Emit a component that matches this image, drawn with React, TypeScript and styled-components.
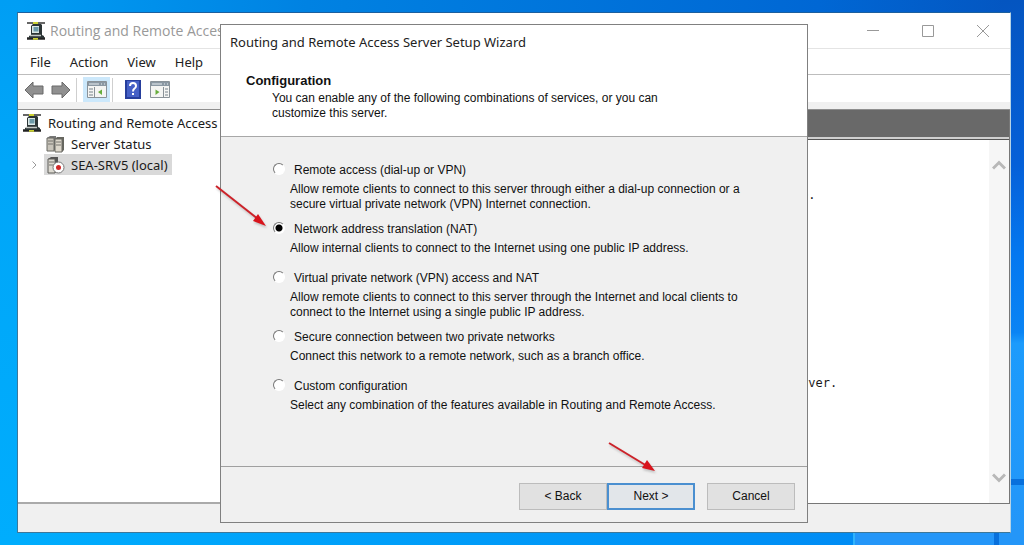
import React, { useState } from "react";
import styled, { createGlobalStyle } from "styled-components";

const ui = `"Noto Sans", "Open Sans", sans-serif`;
const caption = `"Open Sans", "Noto Sans", sans-serif`;
const classic = `"Liberation Sans", Arial, sans-serif`;

const GlobalStyle = createGlobalStyle`
  * { box-sizing: border-box; }
  body { margin: 0; background: #0078d7; font-family: ${ui}; color: #1a1a1a; }
  button, input { font: inherit; }
`;

const Desktop = styled.div`
  position: relative;
  display: flex;
  min-height: 100vh;
  padding: 12px 13px 12px 17px;
  overflow: hidden;
  background: #0a84ea;
`;

const Wallpaper = styled.svg`
  position: absolute;
  inset: 0;
  width: 100%;
  height: 100%;
`;

const ConsoleWindow = styled.section`
  position: relative;
  flex: 1;
  display: flex;
  flex-direction: column;
  min-width: 0;
  background: #f0f0f0;
  border: 1px solid #3d7799;
  border-top-color: #1c5f9e;
  border-right-color: #b5d3e6;
`;

const TitleBar = styled.header`
  display: flex;
  align-items: center;
  gap: 4px;
  height: 35px;
  padding-left: 8px;
  background: #fff;
  color: #999;
  white-space: nowrap;
`;

const WindowTitle = styled.h1`
  flex: 1;
  margin: 0;
  font: 400 14px/20px ${caption};
`;

const CaptionButton = styled.button`
  display: grid;
  place-items: center;
  width: 55px;
  height: 34px;
  padding: 0;
  border: 0;
  background: none;
  color: #999;
`;

const CaptionButtons = styled.div`
  display: flex;
`;

const MenuBar = styled.nav`
  display: flex;
  align-items: center;
  gap: 19px;
  height: 27px;
  padding-left: 12px;
  background: #fff;
  border-top: 1px solid #e4e4e4;
  border-bottom: 1px solid #bdbdbd;
`;

const MenuItem = styled.button`
  padding: 0;
  border: 0;
  background: none;
  color: #222;
  font-size: 13px;
  line-height: 20px;
`;

const ToolBar = styled.div`
  display: flex;
  align-items: flex-end;
  height: 27px;
  padding-left: 2px;
  background: #fff;
`;

const ToolButton = styled.button<{ $on?: boolean }>`
  display: grid;
  place-items: center;
  width: 27px;
  height: 25px;
  padding: 0;
  border: 0;
  background: ${(p) => (p.$on ? "#cce8fb" : "none")};
`;

const ToolDivider = styled.span`
  width: 1px;
  height: 24px;
  margin: 0 6px 0 2px;
  background: #cfcfcf;
`;

const Panes = styled.div`
  flex: 1;
  display: grid;
  grid-template-columns: 206px 1fr;
  margin-top: 7px;
  border-top: 1px solid #8e8e8e;
`;

const TreePane = styled.ul`
  margin: 0;
  padding: 2px 0 0;
  list-style: none;
  background: #fff;
  border-bottom: 2px solid #aaa;
`;

const TreeRow = styled.li<{ $level: number }>`
  display: flex;
  align-items: center;
  gap: 4px;
  height: 21px;
  padding-left: ${(p) => (p.$level ? 10 : 4)}px;
  font-size: 13px;
  line-height: 20px;
  white-space: nowrap;
`;

const Twisty = styled.span`
  display: grid;
  width: 12px;
  place-items: center;
`;

const TreeLabel = styled.span<{ $selected?: boolean }>`
  display: flex;
  align-items: center;
  gap: 6px;
  height: 21px;
  padding: 0 4px 0 2px;
  background: ${(p) => (p.$selected ? "#d9d9d9" : "none")};
`;

const ResultPane = styled.div`
  display: flex;
  flex-direction: column;
  background: #fff;
  border-right: 1px solid #777;
  border-bottom: 1px solid #777;
`;

const ResultHeader = styled.div`
  height: 30px;
  background: #696969;
  border-bottom: 1px solid #555;
  box-shadow: inset 0 -2px #d0d0d0;
`;

const ResultBody = styled.div`
  flex: 1;
  display: flex;
`;

const ResultText = styled.div`
  flex: 1;
  display: flex;
  flex-direction: column;
  gap: 168px;
  padding: 45px 0 0 577px;
  font: 12px/20px "DejaVu Sans Mono", monospace;
  p { margin: 0; }
`;

const ScrollBar = styled.div`
  display: flex;
  flex-direction: column;
  justify-content: space-between;
  align-items: center;
  width: 20px;
  padding: 20px 0;
  background: #f6f6f6;
`;

const StatusBar = styled.footer`
  height: 28px;
`;

const Dialog = styled.section`
  position: absolute;
  top: 24px;
  left: 220px;
  width: min(588px, calc(100% - 220px));
  display: flex;
  flex-direction: column;
  border: 1px solid #808080;
  background: #f0f0f0;
  font-family: ${classic};
  font-size: 12px;
  line-height: 15px;
  color: #111;
`;

const DialogHead = styled.header`
  padding: 6px 9px 15px;
  background: #fff;
  border-bottom: 1px solid #a8a8a8;
`;

const DialogTitle = styled.h2`
  margin: 0 0 20px;
  font: 400 13px/22px ${ui};
  color: #222;
`;

const PageTitle = styled.h3`
  margin: 0 0 3px 16px;
  font-size: 13px;
  line-height: 15px;
`;

const PageIntro = styled.p`
  max-width: 420px;
  margin: 0 0 0 42px;
`;

const Options = styled.fieldset`
  display: flex;
  flex-direction: column;
  gap: 9px;
  min-width: 0;
  margin: 0;
  padding: 25px 44px 48px 52px;
  border: 0;
`;

const Option = styled.div`
  display: grid;
  grid-template-columns: 17px 1fr;
  row-gap: 4px;
`;

const OptionLabel = styled.label`
  grid-column: 1 / -1;
  display: flex;
  align-items: center;
  gap: 9px;
  line-height: 16px;
`;

const Radio = styled.input`
  appearance: none;
  width: 12px;
  height: 12px;
  margin: 0 0 3px;
  border: 1px solid;
  border-color: #777 #fff #fff #777;
  border-radius: 50%;
  background: #fff;

  &:checked {
    background: radial-gradient(circle, #000 3px, #fff 4px);
  }
`;

const OptionText = styled.p`
  grid-column: 2;
  max-width: 468px;
  min-height: 20px;
  margin: 0;
`;

const DialogFoot = styled.footer`
  display: flex;
  justify-content: flex-end;
  padding: 16px 12px 12px;
  border-top: 1px solid #a0a0a0;
`;

const PushButton = styled.button<{ $primary?: boolean; $apart?: boolean }>`
  width: 88px;
  height: 27px;
  margin-left: ${(p) => (p.$apart ? 12 : 0)}px;
  padding: 0;
  border: ${(p) => (p.$primary ? "2px solid #4a8fd0" : "1px solid #bcbcbc")};
  background: ${(p) => (p.$primary ? "#e2e6ea" : "#e1e1e1")};
  color: #111;
`;

const Pointer = styled.svg<{ $x: number; $y: number }>`
  position: absolute;
  left: ${(p) => p.$x}px;
  top: ${(p) => p.$y}px;
  filter: drop-shadow(1px 2px 1px #0003);
`;

const RouterIcon = () => (
  <svg width="20" height="18" viewBox="0 0 20 18" aria-hidden="true">
    <path d="M1 1h18" stroke="#333" strokeWidth="1.500" />
    <path d="M1 16.500h18" stroke="#222" strokeWidth="2.500" />
    <path d="M7 1h5M7 16.500h5" stroke="#ccd233" strokeWidth="2.500" />
    <path d="M5 4l2-2h8l1 1v10l2 1v2H3v-2l2-1z" fill="#2c3536" />
    <path d="M6 4h7v7H6z" fill="#dce8e6" />
    <path d="M7.500 5h5v4.500h-5z" fill="#6d9aa8" />
    <path d="M4 13.500h11" stroke="#c4c9c5" strokeWidth="1.500" />
  </svg>
);

const ServersIcon = () => (
  <svg width="19" height="18" viewBox="0 0 19 18" aria-hidden="true">
    <path d="M1 3l3-2h6v13l-2 2H1z" fill="#777" />
    <path d="M1 3h7v13H1z" fill="#c9c5bb" stroke="#686862" />
    <path d="M9 4l2-2h7v13l-2 2H9z" fill="#66665f" />
    <path d="M9 4h7v13H9z" fill="#ddd8cc" stroke="#686862" />
    <path d="M2 6h5M2 9h5M10 7h5M10 10h5" stroke="#77756e" />
  </svg>
);

const StoppedServerIcon = () => (
  <svg width="19" height="18" viewBox="0 0 19 18" aria-hidden="true">
    <path d="M2 3l3-2h7v13l-2 3H2z" fill="#555" />
    <path d="M2 3h7v14H2z" fill="#dcd9d0" stroke="#5c5c58" />
    <path d="M3 6h5M3 9h5" stroke="#77756e" />
    <circle cx="12.500" cy="11.500" r="5.500" fill="#fff" stroke="#777" />
    <circle cx="12.500" cy="11.500" r="2.500" fill="#d02828" />
  </svg>
);

const ArrowIcon = ({ flip = false }: { flip?: boolean }) => (
  <svg width="20" height="18" viewBox="0 0 20 18" aria-hidden="true">
    <path
      d={flip ? "M19 9l-8-8v4H1v8h10v4z" : "M1 9l8-8v4h10v8H9v4z"}
      fill="#909090"
      stroke="#686868"
    />
  </svg>
);

const PaneIcon = ({ right = false }: { right?: boolean }) => (
  <svg width="20" height="17" viewBox="0 0 20 17" aria-hidden="true">
    <path d="M.5 .5h19v16H.5z" fill="#f5f5f3" stroke="#8a9298" />
    <path d="M1 1h18v4H1z" fill="#8b98a3" />
    <path d="M2 3h10M14 3h1M17 3h1" stroke="#e9eef1" />
    <path d={right ? "M13.500 6v10" : "M7.500 6v10"} stroke="#8a9298" />
    <path d={right ? "M15 8h3M15 11h3M15 14h3" : "M2 8h4M2 11h4M2 14h4"} stroke="#77828b" />
    <path d={right ? "M5.500 8.500l4 2.500-4 3z" : "M15 8.500l-4 2.500 4 3z"} fill="#68ad3c" />
  </svg>
);

const HelpIcon = () => (
  <svg width="16" height="19" viewBox="0 0 16 19" aria-hidden="true">
    <path d="M0 0h16v19H0z" fill="#263e9c" />
    <path d="M2 1h12v16H2z" fill="#4560c6" />
    <path d="M5 6q0-3 3-3t3 3q0 1.500-1.500 2.500T8 11.500" fill="none" stroke="#fff" strokeWidth="2" />
    <path d="M7 13h2v2H7z" fill="#fff" />
  </svg>
);

const Chevron = ({ down = false }: { down?: boolean }) => (
  <svg width="14" height="10" viewBox="0 0 14 10" aria-hidden="true">
    <path d={down ? "M1 1.500l6 6 6-6" : "M1 8.500l6-6 6 6"} fill="none" stroke="#b8b8b8" strokeWidth="3" />
  </svg>
);

const options = [
  ["Remote access (dial-up or VPN)", "Allow remote clients to connect to this server through either a dial-up connection or a secure virtual private network (VPN) Internet connection."],
  ["Network address translation (NAT)", "Allow internal clients to connect to the Internet using one public IP address."],
  ["Virtual private network (VPN) access and NAT", "Allow remote clients to connect to this server through the Internet and local clients to connect to the Internet using a single public IP address."],
  ["Secure connection between two private networks", "Connect this network to a remote network, such as a branch office."],
  ["Custom configuration", "Select any combination of the features available in Routing and Remote Access."],
];

export default function App() {
  const [choice, setChoice] = useState(1);
  return (
    <Desktop>
      <GlobalStyle />
      <Wallpaper viewBox="0 0 1024 545" preserveAspectRatio="none" aria-hidden="true">
        <defs>
          <linearGradient id="top" x1="0" x2="1">
            <stop offset="0" stopColor="#009ef4" />
            <stop offset=".3" stopColor="#0082e2" />
            <stop offset=".8" stopColor="#0067d4" />
            <stop offset="1" stopColor="#0455c0" />
          </linearGradient>
          <linearGradient id="left" x1="0" x2="0" y1="0" y2="1">
            <stop offset="0" stopColor="#009ef4" />
            <stop offset=".3" stopColor="#00a6f8" />
            <stop offset="1" stopColor="#00adfd" />
          </linearGradient>
          <linearGradient id="right" x1="0" x2="0" y1="0" y2="1">
            <stop offset="0" stopColor="#0455c0" />
            <stop offset=".3" stopColor="#0560d8" />
            <stop offset=".47" stopColor="#0478f0" />
            <stop offset=".61" stopColor="#0a84f4" />
            <stop offset=".63" stopColor="#1c9bfc" />
            <stop offset="1" stopColor="#2496f8" />
          </linearGradient>
          <linearGradient id="bottom" x1="0" x2="1">
            <stop offset="0" stopColor="#00adfd" />
            <stop offset="1" stopColor="#008cf4" />
          </linearGradient>
        </defs>
        <path d="M0 0h1024v20H0z" fill="url(#top)" />
        <path d="M0 0h20v545H0z" fill="url(#left)" />
        <path d="M1000 0h24v545h-24z" fill="url(#right)" />
        <path d="M17 530h836v15H17z" fill="url(#bottom)" />
        <path d="M853 530h171v15H853z" fill="#2496f8" />
        <path d="M853 530h2v15h-2z" fill="#30b4fc" />
        <path d="M1010 479h14v6h-14zM994 530h5v15h-5z" fill="#0870dc" />
      </Wallpaper>

      <ConsoleWindow>
        <TitleBar>
          <RouterIcon />
          <WindowTitle>Routing and Remote Access</WindowTitle>
          <CaptionButtons>
            <CaptionButton aria-label="Minimize">
              <svg width="12" height="12"><path d="M0 5.500h12" stroke="currentColor" /></svg>
            </CaptionButton>
            <CaptionButton aria-label="Maximize">
              <svg width="12" height="12"><path d="M.5 .5h11v11H.5z" fill="none" stroke="currentColor" /></svg>
            </CaptionButton>
            <CaptionButton aria-label="Close">
              <svg width="12" height="12"><path d="M0 0l12 12M12 0L0 12" stroke="currentColor" /></svg>
            </CaptionButton>
          </CaptionButtons>
        </TitleBar>
        <MenuBar>
          {["File", "Action", "View", "Help"].map((m) => <MenuItem key={m}>{m}</MenuItem>)}
        </MenuBar>
        <ToolBar>
          <ToolButton aria-label="Back"><ArrowIcon /></ToolButton>
          <ToolButton aria-label="Forward"><ArrowIcon flip /></ToolButton>
          <ToolDivider />
          <ToolButton $on aria-label="Show or hide console tree"><PaneIcon /></ToolButton>
          <ToolDivider />
          <ToolButton aria-label="Help"><HelpIcon /></ToolButton>
          <ToolButton aria-label="Show or hide action pane"><PaneIcon right /></ToolButton>
        </ToolBar>
        <Panes>
          <TreePane>
            <TreeRow $level={0}>
              <RouterIcon />
              <TreeLabel>Routing and Remote Access</TreeLabel>
            </TreeRow>
            <TreeRow $level={1}>
              <Twisty />
              <TreeLabel><ServersIcon />Server Status</TreeLabel>
            </TreeRow>
            <TreeRow $level={1}>
              <Twisty>
                <svg width="5" height="8"><path d="M.5 .5L4 4 .5 7.500" fill="none" stroke="#999" /></svg>
              </Twisty>
              <TreeLabel $selected><StoppedServerIcon />SEA-SRV5 (local)</TreeLabel>
            </TreeRow>
          </TreePane>
          <ResultPane>
            <ResultHeader />
            <ResultBody>
              <ResultText>
                <p>e.</p>
                <p>rver.</p>
              </ResultText>
              <ScrollBar><Chevron /><Chevron down /></ScrollBar>
            </ResultBody>
          </ResultPane>
        </Panes>
        <StatusBar />
      </ConsoleWindow>

      <Dialog role="dialog" aria-labelledby="wizard-title">
        <DialogHead>
          <DialogTitle id="wizard-title">Routing and Remote Access Server Setup Wizard</DialogTitle>
          <PageTitle>Configuration</PageTitle>
          <PageIntro>
            You can enable any of the following combinations of services, or you can<br />
            customize this server.
          </PageIntro>
        </DialogHead>
        <Options aria-label="Configuration">
          {options.map(([label, text], i) => (
            <Option key={label}>
              <OptionLabel>
                <Radio type="radio" name="configuration" checked={choice === i} onChange={() => setChoice(i)} />
                {label}
              </OptionLabel>
              <OptionText>{text}</OptionText>
            </Option>
          ))}
        </Options>
        <DialogFoot>
          <PushButton>&lt; Back</PushButton>
          <PushButton $primary>Next &gt;</PushButton>
          <PushButton $apart>Cancel</PushButton>
        </DialogFoot>
      </Dialog>

      <Pointer $x={215} $y={185} width="54" height="44" aria-hidden="true">
        <path d="M1 1l42 33" stroke="#cc2229" strokeWidth="2" />
        <path d="M51 41l-13-5 5-7z" fill="#d8141c" />
      </Pointer>
      <Pointer $x={608} $y={441} width="50" height="34" aria-hidden="true">
        <path d="M1 2l38 23" stroke="#cc2229" strokeWidth="2" />
        <path d="M47 30l-13-3 5-8z" fill="#d8141c" />
      </Pointer>
    </Desktop>
  );
}
